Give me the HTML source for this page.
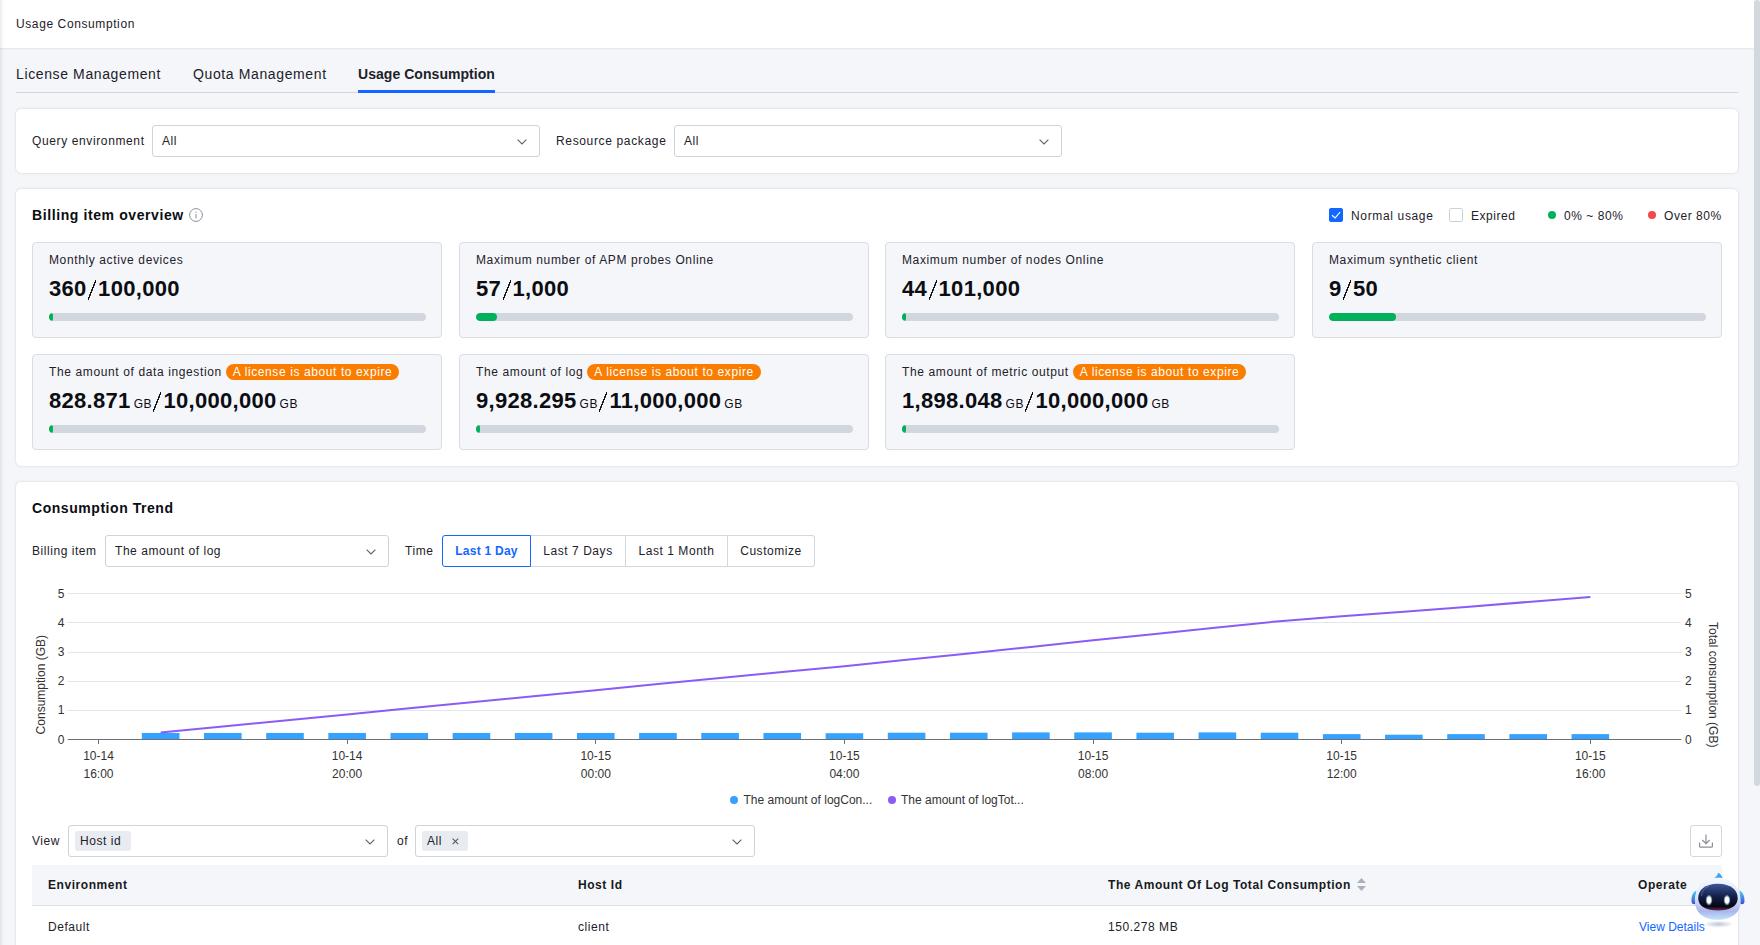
<!DOCTYPE html>
<html><head><meta charset="utf-8">
<style>
*{box-sizing:border-box;margin:0;padding:0}
html,body{width:1760px;height:945px;overflow:hidden}
body{font-family:"Liberation Sans",sans-serif;background:#f4f6fa;color:#1d2129;position:relative;font-size:12px;letter-spacing:.55px}
.abs{position:absolute}
#lshadow{position:absolute;left:0;top:0;width:4px;height:945px;background:linear-gradient(to right,rgba(0,0,0,.08),rgba(0,0,0,0));z-index:5}
#header{position:absolute;left:0;top:0;width:1754px;height:48px;background:#fff;box-shadow:0 1px 2px rgba(0,0,0,.08)}
#header span{position:absolute;left:16px;top:17px;font-size:12px;line-height:15px;letter-spacing:.6px}
#scroll{position:absolute;left:1754px;top:0;width:6px;height:945px;background:#f4f6fa}
#thumb{position:absolute;left:1754px;top:0;width:6px;height:786px;background:#d3d7de;border-radius:3px}
.tab{position:absolute;top:66px;font-size:14px;line-height:17px;letter-spacing:.62px;color:#1d2129}
#tabline{position:absolute;left:16px;top:92px;width:1722px;height:1px;background:#d3d6dc}
#tabact{position:absolute;left:358px;top:90px;width:137px;height:3px;background:#1366ff}
.panel{position:absolute;left:16px;width:1722px;background:#fff;border-radius:5px;box-shadow:0 0 2.5px rgba(0,0,0,.17)}
.lbl{position:absolute;font-size:12px;line-height:15px}
.sel{position:absolute;height:32px;border:1px solid #cfd3da;border-radius:3px;background:#fff}
.sel .v{position:absolute;left:9px;top:8px;font-size:12px;line-height:15px}
.chev{position:absolute;top:13px;width:10px;height:5.6px}

.card{position:absolute;width:410px;height:96px;background:#f5f6fa;border:1px solid #d8dce3;border-radius:4px}
.card .t{position:absolute;left:16px;top:10px;font-size:12px;line-height:15px;white-space:nowrap;display:flex;align-items:center;letter-spacing:.62px}
.badge{display:inline-block;margin-left:4px;height:16px;line-height:16px;padding:0 7px;border-radius:8px;background:#fa7d00;color:#fff;font-size:12px;letter-spacing:.6px}
.card .n{position:absolute;left:16px;top:33px;font-size:22px;line-height:24px;font-weight:700;letter-spacing:.3px;white-space:nowrap;color:#0b0d12}
.card .n .sl{display:inline-block;width:8px;height:20px;position:relative;top:4px;margin:0 2px 0 1.5px;background:linear-gradient(to bottom right,transparent calc(50% - .8px),#111 calc(50% - .6px),#111 calc(50% + .6px),transparent calc(50% + .8px))}
.card .n .u{font-size:12px;font-weight:400;letter-spacing:.5px;margin-left:3px;margin-right:0}
.bar{position:absolute;left:16px;top:70px;width:377px;height:8px;border-radius:4px;background:#d2d6de;overflow:hidden}
.bar i{position:absolute;left:0;top:0;height:8px;border-radius:4px;background:#00b159}
.cb{position:absolute;width:14px;height:14px;border-radius:2px}
.dot{position:absolute;width:8px;height:8px;border-radius:4px}

.btng{position:absolute;display:flex;height:32px}
.btng div{height:32px;border:1px solid #d3d7de;border-left:none;font-size:12px;line-height:29px;padding-top:1px;text-align:center;background:#fff}
.btng div:first-child{border-left:1px solid #1366ff;border-color:#1366ff;color:#1366ff;font-weight:700;border-radius:3px 0 0 3px;letter-spacing:.25px}
.btng div:last-child{border-radius:0 3px 3px 0}
.tag{position:absolute;top:5px;height:20px;background:#e8ebf0;border-radius:3px;font-size:12px;line-height:20px}
.th{position:absolute;top:13px;font-size:12px;line-height:15px;font-weight:700;letter-spacing:.56px;color:#161a20}
.td{position:absolute;top:438px;font-size:12px;line-height:15px}
svg{letter-spacing:0}
</style></head>
<body>
<div id="lshadow"></div>
<div id="header"><span>Usage Consumption</span></div>
<div id="thumb"></div>

<div class="tab" style="left:16px">License Management</div>
<div class="tab" style="left:193px">Quota Management</div>
<div class="tab" style="left:358px;font-weight:700;letter-spacing:.05px">Usage Consumption</div>
<div id="tabline"></div>
<div id="tabact"></div>

<!-- panel 1 -->
<div class="panel" style="top:109px;height:64px">
  <div class="lbl" style="left:16px;top:25px;letter-spacing:.62px">Query environment</div>
  <div class="sel" style="left:136px;top:16px;width:388px"><span class="v">All</span>
    <svg class="chev" style="left:364px" viewBox="0 0 10 5.6"><path d="M.6 .6 5 5 9.4 .6" fill="none" stroke="#5a6270" stroke-width="1.1"/></svg></div>
  <div class="lbl" style="left:540px;top:25px;letter-spacing:.65px">Resource package</div>
  <div class="sel" style="left:658px;top:16px;width:388px"><span class="v">All</span>
    <svg class="chev" style="left:364px" viewBox="0 0 10 5.6"><path d="M.6 .6 5 5 9.4 .6" fill="none" stroke="#5a6270" stroke-width="1.1"/></svg></div>
</div>

<!-- panel 2 -->
<div class="panel" id="p2" style="top:189px;height:277px">
  <div class="abs" style="left:16px;top:18px;font-size:14px;line-height:17px;font-weight:700;letter-spacing:.6px;color:#0b0d12">Billing item overview</div>
  <svg class="abs" style="left:173px;top:18.8px" width="14" height="14" viewBox="0 0 14 14"><circle cx="7" cy="7" r="6.4" fill="none" stroke="#8a8f99" stroke-width="1"/><rect x="6.5" y="6" width="1" height="4.5" fill="#8a8f99"/><rect x="6.5" y="3.6" width="1" height="1.2" fill="#8a8f99"/></svg>
  <div class="cb" style="left:1313px;top:19px;background:#1366ff"><svg width="14" height="14" viewBox="0 0 14 14" style="position:absolute;left:0;top:0"><path d="M2.9 7.2 6.2 9.9 11.1 4" fill="none" stroke="#fff" stroke-width="1.15"/></svg></div>
  <div class="lbl" style="left:1335px;top:20px;letter-spacing:.65px">Normal usage</div>
  <div class="cb" style="left:1433px;top:19px;border:1px solid #cdd1d8;background:#fff"></div>
  <div class="lbl" style="left:1455px;top:20px">Expired</div>
  <div class="dot" style="left:1532px;top:22px;background:#00b159"></div>
  <div class="lbl" style="left:1548px;top:20px">0% ~ 80%</div>
  <div class="dot" style="left:1631.5px;top:22px;background:#f5484a"></div>
  <div class="lbl" style="left:1648px;top:20px">Over 80%</div>

  <div class="card" style="left:16px;top:53px"><div class="t">Monthly active devices</div><div class="n">360<span class="sl"></span>100,000</div><div class="bar"><i style="width:4px"></i></div></div>
  <div class="card" style="left:443px;top:53px"><div class="t">Maximum number of APM probes Online</div><div class="n">57<span class="sl"></span>1,000</div><div class="bar"><i style="width:21px"></i></div></div>
  <div class="card" style="left:869px;top:53px"><div class="t">Maximum number of nodes Online</div><div class="n">44<span class="sl"></span>101,000</div><div class="bar"><i style="width:4px"></i></div></div>
  <div class="card" style="left:1296px;top:53px"><div class="t">Maximum synthetic client</div><div class="n">9<span class="sl"></span>50</div><div class="bar"><i style="width:67px"></i></div></div>

  <div class="card" style="left:16px;top:165px"><div class="t" style="top:9px">The amount of data ingestion<span class="badge">A license is about to expire</span></div><div class="n">828.871<span class="u">GB</span><span class="sl"></span>10,000,000<span class="u">GB</span></div><div class="bar"><i style="width:4px"></i></div></div>
  <div class="card" style="left:443px;top:165px"><div class="t" style="top:9px">The amount of log<span class="badge">A license is about to expire</span></div><div class="n">9,928.295<span class="u">GB</span><span class="sl"></span>11,000,000<span class="u">GB</span></div><div class="bar"><i style="width:4px"></i></div></div>
  <div class="card" style="left:869px;top:165px"><div class="t" style="top:9px">The amount of metric output<span class="badge">A license is about to expire</span></div><div class="n">1,898.048<span class="u">GB</span><span class="sl"></span>10,000,000<span class="u">GB</span></div><div class="bar"><i style="width:4px"></i></div></div>
</div>

<!-- panel 3 -->
<div class="panel" id="p3" style="top:482px;height:500px">
  <div class="abs" style="left:16px;top:18px;font-size:14px;line-height:17px;font-weight:700;letter-spacing:.55px;color:#0b0d12">Consumption Trend</div>
  <div class="lbl" style="left:16px;top:62px">Billing item</div>
  <div class="sel" style="left:89px;top:53px;width:284px"><span class="v">The amount of log</span><svg class="chev" style="left:260px" viewBox="0 0 10 5.6"><path d="M.6 .6 5 5 9.4 .6" fill="none" stroke="#5a6270" stroke-width="1.1"/></svg></div>
  <div class="lbl" style="left:389px;top:62px">Time</div>
  <div class="btng" style="left:426px;top:53px"><div style="width:89px">Last 1 Day</div><div style="width:95px">Last 7 Days</div><div style="width:102px">Last 1 Month</div><div style="width:87px">Customize</div></div>
  <svg class="abs" style="left:0;top:0" width="1722" height="463" viewBox="16 482 1722 463">
<line x1="67.7" x2="1681.3" y1="710.5" y2="710.5" stroke="#e3e6ec" stroke-width="1"/>
<line x1="67.7" x2="1681.3" y1="681.5" y2="681.5" stroke="#e3e6ec" stroke-width="1"/>
<line x1="67.7" x2="1681.3" y1="652.5" y2="652.5" stroke="#e3e6ec" stroke-width="1"/>
<line x1="67.7" x2="1681.3" y1="622.5" y2="622.5" stroke="#e3e6ec" stroke-width="1"/>
<line x1="67.7" x2="1681.3" y1="593.5" y2="593.5" stroke="#e3e6ec" stroke-width="1"/>
<rect x="141.86" y="732.95" width="37.6" height="6.25" fill="#35a2ff"/>
<rect x="204.02" y="732.95" width="37.6" height="6.25" fill="#35a2ff"/>
<rect x="266.18" y="732.95" width="37.6" height="6.25" fill="#35a2ff"/>
<rect x="328.34" y="732.95" width="37.6" height="6.25" fill="#35a2ff"/>
<rect x="390.50" y="732.95" width="37.6" height="6.25" fill="#35a2ff"/>
<rect x="452.66" y="732.95" width="37.6" height="6.25" fill="#35a2ff"/>
<rect x="514.82" y="732.95" width="37.6" height="6.25" fill="#35a2ff"/>
<rect x="576.98" y="732.95" width="37.6" height="6.25" fill="#35a2ff"/>
<rect x="639.14" y="732.95" width="37.6" height="6.25" fill="#35a2ff"/>
<rect x="701.30" y="732.95" width="37.6" height="6.25" fill="#35a2ff"/>
<rect x="763.46" y="732.95" width="37.6" height="6.25" fill="#35a2ff"/>
<rect x="825.62" y="733.20" width="37.6" height="6.00" fill="#35a2ff"/>
<rect x="887.78" y="732.70" width="37.6" height="6.50" fill="#35a2ff"/>
<rect x="949.94" y="732.70" width="37.6" height="6.50" fill="#35a2ff"/>
<rect x="1012.10" y="732.40" width="37.6" height="6.80" fill="#35a2ff"/>
<rect x="1074.26" y="732.40" width="37.6" height="6.80" fill="#35a2ff"/>
<rect x="1136.42" y="732.70" width="37.6" height="6.50" fill="#35a2ff"/>
<rect x="1198.58" y="732.40" width="37.6" height="6.80" fill="#35a2ff"/>
<rect x="1260.74" y="732.70" width="37.6" height="6.50" fill="#35a2ff"/>
<rect x="1322.90" y="734.10" width="37.6" height="5.10" fill="#35a2ff"/>
<rect x="1385.06" y="734.70" width="37.6" height="4.50" fill="#35a2ff"/>
<rect x="1447.22" y="734.10" width="37.6" height="5.10" fill="#35a2ff"/>
<rect x="1509.38" y="734.10" width="37.6" height="5.10" fill="#35a2ff"/>
<rect x="1571.54" y="734.10" width="37.6" height="5.10" fill="#35a2ff"/>
<line x1="67.7" x2="1681.3" y1="739.5" y2="739.5" stroke="#6e7079" stroke-width="1"/>
<line x1="98.5" x2="98.5" y1="739.5" y2="744" stroke="#6e7079" stroke-width="1"/>
<line x1="347.5" x2="347.5" y1="739.5" y2="744" stroke="#6e7079" stroke-width="1"/>
<line x1="595.5" x2="595.5" y1="739.5" y2="744" stroke="#6e7079" stroke-width="1"/>
<line x1="844.5" x2="844.5" y1="739.5" y2="744" stroke="#6e7079" stroke-width="1"/>
<line x1="1093.5" x2="1093.5" y1="739.5" y2="744" stroke="#6e7079" stroke-width="1"/>
<line x1="1341.5" x2="1341.5" y1="739.5" y2="744" stroke="#6e7079" stroke-width="1"/>
<line x1="1590.5" x2="1590.5" y1="739.5" y2="744" stroke="#6e7079" stroke-width="1"/>
<polyline points="160.66,732.60 222.82,726.54 284.98,720.48 347.14,714.41 409.30,708.35 471.46,702.29 533.62,696.23 595.78,690.16 657.94,684.10 720.10,678.04 782.26,671.98 844.42,666.16 906.58,659.85 968.74,653.55 1030.90,646.95 1093.06,640.36 1155.22,634.05 1217.38,627.46 1279.54,621.15 1341.70,616.21 1403.86,611.84 1466.02,606.89 1528.18,601.95 1590.34,597.00" fill="none" stroke="#8a5cf5" stroke-width="2" stroke-linejoin="round"/>
<text x="64.5" y="743.5" text-anchor="end" font-family="Liberation Sans" font-size="12" fill="#333">0</text>
<text x="1685" y="743.5" font-family="Liberation Sans" font-size="12" fill="#333">0</text>
<text x="64.5" y="714.3" text-anchor="end" font-family="Liberation Sans" font-size="12" fill="#333">1</text>
<text x="1685" y="714.3" font-family="Liberation Sans" font-size="12" fill="#333">1</text>
<text x="64.5" y="685.1" text-anchor="end" font-family="Liberation Sans" font-size="12" fill="#333">2</text>
<text x="1685" y="685.1" font-family="Liberation Sans" font-size="12" fill="#333">2</text>
<text x="64.5" y="655.9" text-anchor="end" font-family="Liberation Sans" font-size="12" fill="#333">3</text>
<text x="1685" y="655.9" font-family="Liberation Sans" font-size="12" fill="#333">3</text>
<text x="64.5" y="626.7" text-anchor="end" font-family="Liberation Sans" font-size="12" fill="#333">4</text>
<text x="1685" y="626.7" font-family="Liberation Sans" font-size="12" fill="#333">4</text>
<text x="64.5" y="597.5" text-anchor="end" font-family="Liberation Sans" font-size="12" fill="#333">5</text>
<text x="1685" y="597.5" font-family="Liberation Sans" font-size="12" fill="#333">5</text>
<text x="98.5" y="760" text-anchor="middle" font-family="Liberation Sans" font-size="12" fill="#333">10-14</text>
<text x="98.5" y="777.8" text-anchor="middle" font-family="Liberation Sans" font-size="12" fill="#333">16:00</text>
<text x="347.1" y="760" text-anchor="middle" font-family="Liberation Sans" font-size="12" fill="#333">10-14</text>
<text x="347.1" y="777.8" text-anchor="middle" font-family="Liberation Sans" font-size="12" fill="#333">20:00</text>
<text x="595.8" y="760" text-anchor="middle" font-family="Liberation Sans" font-size="12" fill="#333">10-15</text>
<text x="595.8" y="777.8" text-anchor="middle" font-family="Liberation Sans" font-size="12" fill="#333">00:00</text>
<text x="844.4" y="760" text-anchor="middle" font-family="Liberation Sans" font-size="12" fill="#333">10-15</text>
<text x="844.4" y="777.8" text-anchor="middle" font-family="Liberation Sans" font-size="12" fill="#333">04:00</text>
<text x="1093.1" y="760" text-anchor="middle" font-family="Liberation Sans" font-size="12" fill="#333">10-15</text>
<text x="1093.1" y="777.8" text-anchor="middle" font-family="Liberation Sans" font-size="12" fill="#333">08:00</text>
<text x="1341.7" y="760" text-anchor="middle" font-family="Liberation Sans" font-size="12" fill="#333">10-15</text>
<text x="1341.7" y="777.8" text-anchor="middle" font-family="Liberation Sans" font-size="12" fill="#333">12:00</text>
<text x="1590.3" y="760" text-anchor="middle" font-family="Liberation Sans" font-size="12" fill="#333">10-15</text>
<text x="1590.3" y="777.8" text-anchor="middle" font-family="Liberation Sans" font-size="12" fill="#333">16:00</text>
<text transform="translate(45 684.7) rotate(-90)" text-anchor="middle" font-family="Liberation Sans" font-size="12" fill="#333">Consumption (GB)</text>
<text transform="translate(1709 684.7) rotate(90)" text-anchor="middle" font-family="Liberation Sans" font-size="12" fill="#333">Total consumption (GB)</text>
<circle cx="734" cy="800" r="4" fill="#35a2ff"/>
<text x="743.5" y="803.8" font-family="Liberation Sans" font-size="12" fill="#333">The amount of logCon...</text>
<circle cx="892" cy="800" r="4" fill="#8a5cf5"/>
<text x="901" y="803.8" font-family="Liberation Sans" font-size="12" fill="#333">The amount of logTot...</text>
</svg>

  <div class="lbl" style="left:16px;top:352px">View</div>
  <div class="sel" style="left:52px;top:343px;width:320px"><span class="tag" style="left:6px;width:56px;padding-left:5px">Host id</span><svg class="chev" style="left:296px" viewBox="0 0 10 5.6"><path d="M.6 .6 5 5 9.4 .6" fill="none" stroke="#5a6270" stroke-width="1.1"/></svg></div>
  <div class="lbl" style="left:381px;top:352px">of</div>
  <div class="sel" style="left:399px;top:343px;width:340px"><span class="tag" style="left:6px;width:46px;padding-left:5px">All<svg style="position:absolute;left:30px;top:7px" width="7" height="7" viewBox="0 0 7 7"><path d="M.6 .6 6.2 6.2M6.2 .6 .6 6.2" stroke="#555a63" stroke-width="1.1"/></svg></span><svg class="chev" style="left:316px" viewBox="0 0 10 5.6"><path d="M.6 .6 5 5 9.4 .6" fill="none" stroke="#5a6270" stroke-width="1.1"/></svg></div>
  <div class="abs" style="left:1674px;top:343px;width:32px;height:32px;border:1px solid #d3d7de;border-radius:3px;background:#fff">
    <svg style="position:absolute;left:0;top:0" width="30" height="30" viewBox="0 0 30 30"><path d="M15 8.5V17.5M11.3 14 15 17.6 18.7 14" fill="none" stroke="#8c8f95" stroke-width="1.2"/><path d="M8.6 16.5V20.2Q8.6 21.2 9.6 21.2H20.4Q21.4 21.2 21.4 20.2V16.5" fill="none" stroke="#8c8f95" stroke-width="1.2"/></svg>
  </div>
  <div class="abs" style="left:16px;top:383px;width:1690px;height:41px;background:#f5f6fa;border-bottom:1px solid #dcdfe5">
    <div class="th" style="left:16px">Environment</div>
    <div class="th" style="left:546px">Host Id</div>
    <div class="th" style="left:1076px">The Amount Of Log Total Consumption</div>
    <svg style="position:absolute;left:1325px;top:13px" width="9" height="14" viewBox="0 0 9 14"><path d="M4.5 0 9 5H0Z M0 8H9L4.5 13Z" fill="#aab1bc"/></svg>
    <div class="th" style="left:1606px">Operate</div>
  </div>
  <div class="td" style="left:32px">Default</div>
  <div class="td" style="left:562px">client</div>
  <div class="td" style="left:1092px">150.278 MB</div>
  <div class="td" style="left:1623px;color:#1366ff;letter-spacing:0">View Details</div>
</div>

<svg class="abs" style="left:1685px;top:868px;z-index:3" width="65" height="62" viewBox="1685 868 65 62">
<defs>
<radialGradient id="shd" cx="0.5" cy="0.5" r="0.5"><stop offset="0" stop-color="#aab2cc" stop-opacity=".75"/><stop offset="1" stop-color="#aab2cc" stop-opacity="0"/></radialGradient>
<linearGradient id="head" x1="0" y1="0" x2="0" y2="1"><stop offset="0" stop-color="#f3f8ff"/><stop offset=".45" stop-color="#dfe7fb"/><stop offset=".8" stop-color="#aab6ec"/><stop offset="1" stop-color="#bfe6fb"/></linearGradient>
<linearGradient id="visor" x1="0" y1="0" x2="0" y2="1"><stop offset="0" stop-color="#3d5596"/><stop offset=".45" stop-color="#16224e"/><stop offset=".85" stop-color="#05060f"/><stop offset="1" stop-color="#6a2a5a"/></linearGradient>
<linearGradient id="ear" x1="0" y1="0" x2="0" y2="1"><stop offset="0" stop-color="#4fd0f5"/><stop offset="1" stop-color="#3a4fd6"/></linearGradient>
<radialGradient id="eye" cx=".5" cy=".5" r=".5"><stop offset=".55" stop-color="#ffffff"/><stop offset="1" stop-color="#7fdcff" stop-opacity=".2"/></radialGradient>
</defs>
<ellipse cx="1718.4" cy="924.2" rx="15" ry="3.6" fill="url(#shd)"/>
<path d="M1696.4 890.5C1692.5 892 1691 897 1691.6 902.2C1692 904.2 1694 904.6 1696 903.6Z" fill="url(#ear)"/>
<path d="M1739.4 890.5C1743.3 892 1744.8 897 1744.4 902.2C1744 904.2 1742 904.6 1740 903.6Z" fill="url(#ear)"/>
<path d="M1713.6 878.6C1716 877 1717.6 875 1718.4 872.8C1720.6 874 1722.2 876.2 1722.6 878.6Z" fill="#3ea4f5"/>
<path d="M1717.8 877.8C1731.5 877.8 1740.4 887.5 1740.7 900.5C1741 912.5 1732 919.8 1717.8 919.8C1703.6 919.8 1694.6 912.5 1694.9 900.5C1695.2 887.5 1704.1 877.8 1717.8 877.8Z" fill="url(#head)"/>
<path d="M1717.9 883.8C1731 883.8 1737.7 890.2 1737.7 898.2C1737.7 906.2 1729.8 910.4 1717.9 910.4C1706 910.4 1698.2 906.2 1698.2 898.2C1698.2 890.2 1704.8 883.8 1717.9 883.8Z" fill="url(#visor)"/>
<path d="M1701.5 896C1702 891 1705 887.5 1709 886.3" fill="none" stroke="#6f8fc8" stroke-opacity=".55" stroke-width="1"/>
<ellipse cx="1709" cy="900.1" rx="3.4" ry="5.4" fill="url(#eye)"/>
<ellipse cx="1727" cy="900.1" rx="3.4" ry="5.4" fill="url(#eye)"/>
</svg>
</body></html>
